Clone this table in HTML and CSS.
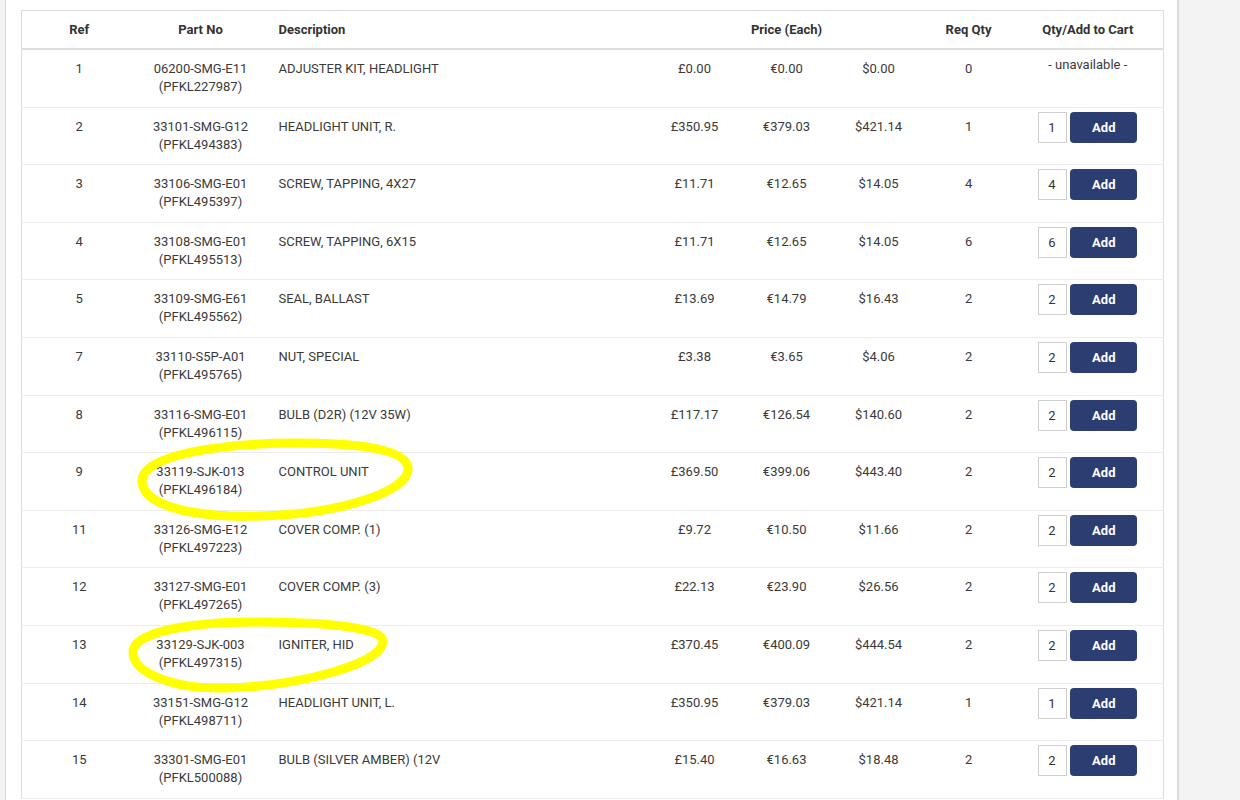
FILE: index.html
```html
<!DOCTYPE html>
<html lang="en">
<head>
<meta charset="utf-8">
<title>Parts</title>
<link rel="stylesheet" href="styles.css">
</head>
<body>
<div class="page">
  <table class="parts">
    <colgroup>
      <col class="c-ref"><col class="c-part"><col class="c-desc"><col class="c-p"><col class="c-p"><col class="c-p"><col class="c-req"><col class="c-qty">
    </colgroup>
    <thead>
      <tr>
        <th>Ref</th>
        <th>Part No</th>
        <th class="left">Description</th>
        <th colspan="3">Price (Each)</th>
        <th>Req Qty</th>
        <th>Qty/Add to Cart</th>
      </tr>
    </thead>
    <tbody>
      <tr><td>1</td><td>06200-SMG-E11<br>(PFKL227987)</td><td class="left">ADJUSTER KIT, HEADLIGHT</td><td>£0.00</td><td>€0.00</td><td>$0.00</td><td>0</td><td class="cart na">- unavailable -</td></tr>
      <tr><td>2</td><td>33101-SMG-G12<br>(PFKL494383)</td><td class="left">HEADLIGHT UNIT, R.</td><td>£350.95</td><td>€379.03</td><td>$421.14</td><td>1</td><td class="cart"><div class="add"><input class="qty" type="text" value="1"><button class="btn">Add</button></div></td></tr>
      <tr><td>3</td><td>33106-SMG-E01<br>(PFKL495397)</td><td class="left">SCREW, TAPPING, 4X27</td><td>£11.71</td><td>€12.65</td><td>$14.05</td><td>4</td><td class="cart"><div class="add"><input class="qty" type="text" value="4"><button class="btn">Add</button></div></td></tr>
      <tr><td>4</td><td>33108-SMG-E01<br>(PFKL495513)</td><td class="left">SCREW, TAPPING, 6X15</td><td>£11.71</td><td>€12.65</td><td>$14.05</td><td>6</td><td class="cart"><div class="add"><input class="qty" type="text" value="6"><button class="btn">Add</button></div></td></tr>
      <tr><td>5</td><td>33109-SMG-E61<br>(PFKL495562)</td><td class="left">SEAL, BALLAST</td><td>£13.69</td><td>€14.79</td><td>$16.43</td><td>2</td><td class="cart"><div class="add"><input class="qty" type="text" value="2"><button class="btn">Add</button></div></td></tr>
      <tr><td>7</td><td>33110-S5P-A01<br>(PFKL495765)</td><td class="left">NUT, SPECIAL</td><td>£3.38</td><td>€3.65</td><td>$4.06</td><td>2</td><td class="cart"><div class="add"><input class="qty" type="text" value="2"><button class="btn">Add</button></div></td></tr>
      <tr><td>8</td><td>33116-SMG-E01<br>(PFKL496115)</td><td class="left">BULB (D2R) (12V 35W)</td><td>£117.17</td><td>€126.54</td><td>$140.60</td><td>2</td><td class="cart"><div class="add"><input class="qty" type="text" value="2"><button class="btn">Add</button></div></td></tr>
      <tr><td>9</td><td>33119-SJK-013<br>(PFKL496184)</td><td class="left">CONTROL UNIT</td><td>£369.50</td><td>€399.06</td><td>$443.40</td><td>2</td><td class="cart"><div class="add"><input class="qty" type="text" value="2"><button class="btn">Add</button></div></td></tr>
      <tr><td>11</td><td>33126-SMG-E12<br>(PFKL497223)</td><td class="left">COVER COMP. (1)</td><td>£9.72</td><td>€10.50</td><td>$11.66</td><td>2</td><td class="cart"><div class="add"><input class="qty" type="text" value="2"><button class="btn">Add</button></div></td></tr>
      <tr><td>12</td><td>33127-SMG-E01<br>(PFKL497265)</td><td class="left">COVER COMP. (3)</td><td>£22.13</td><td>€23.90</td><td>$26.56</td><td>2</td><td class="cart"><div class="add"><input class="qty" type="text" value="2"><button class="btn">Add</button></div></td></tr>
      <tr><td>13</td><td>33129-SJK-003<br>(PFKL497315)</td><td class="left">IGNITER, HID</td><td>£370.45</td><td>€400.09</td><td>$444.54</td><td>2</td><td class="cart"><div class="add"><input class="qty" type="text" value="2"><button class="btn">Add</button></div></td></tr>
      <tr><td>14</td><td>33151-SMG-G12<br>(PFKL498711)</td><td class="left">HEADLIGHT UNIT, L.</td><td>£350.95</td><td>€379.03</td><td>$421.14</td><td>1</td><td class="cart"><div class="add"><input class="qty" type="text" value="1"><button class="btn">Add</button></div></td></tr>
      <tr><td>15</td><td>33301-SMG-E01<br>(PFKL500088)</td><td class="left">BULB (SILVER AMBER) (12V</td><td>£15.40</td><td>€16.63</td><td>$18.48</td><td>2</td><td class="cart"><div class="add"><input class="qty" type="text" value="2"><button class="btn">Add</button></div></td></tr>
    </tbody>
  </table>
</div>
<svg class="marks" width="1240" height="800" viewBox="0 0 1240 800" xmlns="http://www.w3.org/2000/svg">
  <path d="M142,482 C140,455 220,443 300,443 C370,443 410,452 408,470 C406,492 340,514 260,516 C190,518 144,505 142,482 Z" fill="none" stroke="#ffff00" stroke-width="9" stroke-linejoin="round"/>
  <path d="M133,652 C133,632 190,622 255,622 C330,622 385,628 383,642 C381,664 300,686 225,688 C170,689 133,672 133,652 Z" fill="none" stroke="#ffff00" stroke-width="9" stroke-linejoin="round"/>
</svg>
</body>
</html>
```
FILE: styles.css
```css
html, body {
  margin: 0;
  padding: 0;
  overflow: hidden;
}
body {
  background: #f3f3f3;
  font-family: Roboto, "Liberation Sans", Arial, sans-serif;
  font-size: 13px;
  color: #333;
  position: relative;
  height: 800px;
}
.page {
  margin-left: 5px;
  width: 1142px;
  background: #fff;
  border-left: 1px solid #d8d8d8;
  border-right: 2px solid #dcdcdc;
  padding: 10px 14px 0 15px;
  min-height: 790px;
}
.parts {
  width: 1142px;
  border-collapse: collapse;
  table-layout: fixed;
  border: 1px solid #dcdcdc;
}
.c-ref { width: 115px; }
.c-part { width: 128px; }
.c-desc { width: 384px; }
.c-p { width: 92px; }
.c-req { width: 88px; }
.c-qty { width: 151px; }
.parts th {
  font-weight: 700;
  text-align: center;
  line-height: 18px;
  padding: 10px 6px 9px;
  border-bottom: 2px solid #dedede;
  color: #333;
}
.parts td {
  text-align: center;
  vertical-align: top;
  line-height: 18px;
  padding: 10px 6px 10px;
  height: 36.6px;
  box-sizing: content-box;
  border-bottom: 1px solid #ececec;
  color: #3a3a3a;
}
.parts .left {
  text-align: left;
  padding-left: 14px;
}
.parts td.cart {
  padding-top: 4px;
  padding-bottom: 16px;
  height: 36.6px;
}
.parts td.na {
  padding-top: 6px;
  padding-bottom: 14px;
}
.add {
  display: flex;
  justify-content: center;
  gap: 3px;
}
.qty {
  box-sizing: border-box;
  width: 29px;
  height: 31px;
  border: 1px solid #cfcfcf;
  padding: 0 0 0 9px;
  margin: 0;
  font-family: inherit;
  font-size: 13px;
  color: #333;
  background: #fff;
}
.btn {
  width: 67px;
  height: 31px;
  border: 0;
  border-radius: 4px;
  background: #2b3d71;
  color: #fff;
  font-family: inherit;
  font-weight: 700;
  font-size: 13px;
  margin: 0;
  padding: 0;
}
.marks {
  position: absolute;
  left: 0;
  top: 0;
  pointer-events: none;
}
```
